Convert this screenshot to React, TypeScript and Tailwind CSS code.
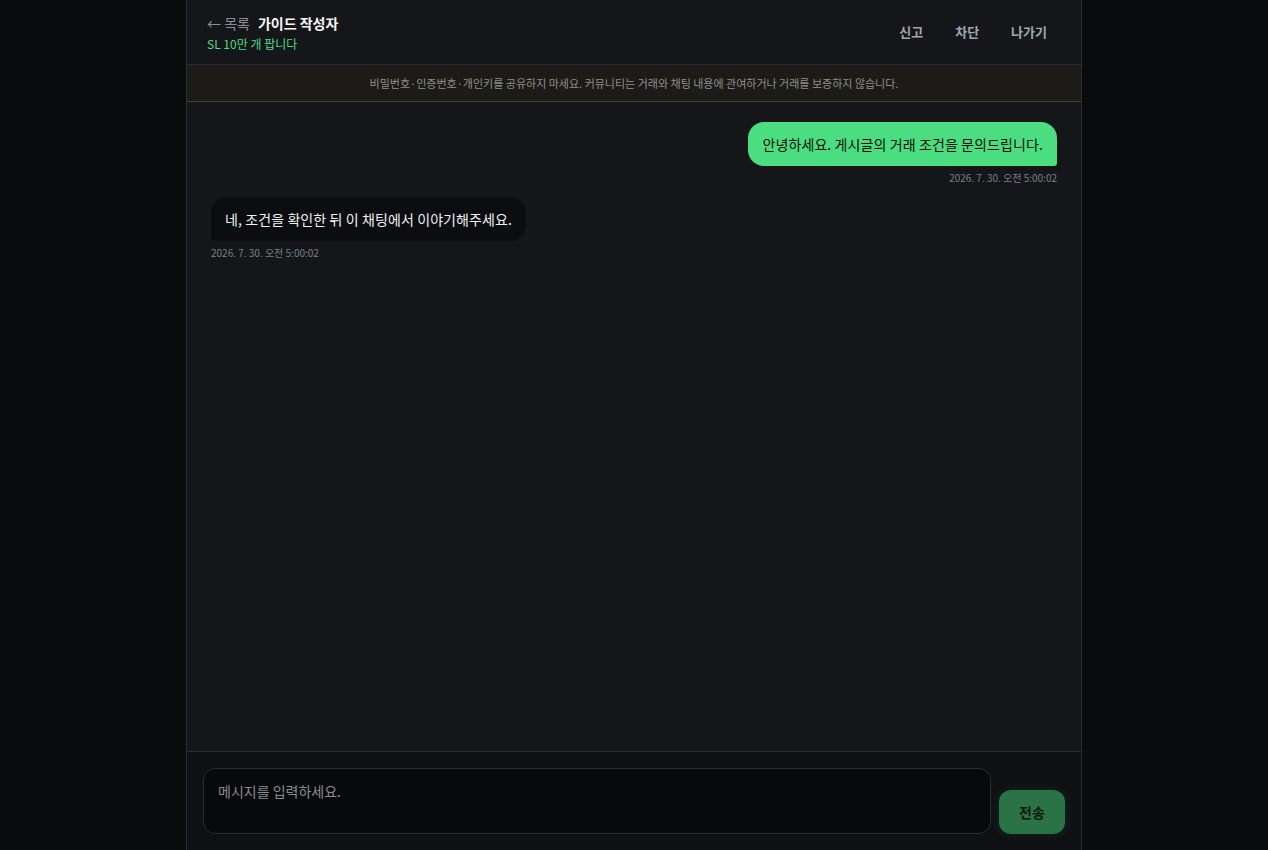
import React from 'react'

const FONT = { fontFamily: '"Noto Sans CJK KR", "Noto Sans", sans-serif' }

type Msg = { mine: boolean; text: string; time: string }

const MESSAGES: Msg[] = [
  { mine: true, text: '안녕하세요. 게시글의 거래 조건을 문의드립니다.', time: '2026. 7. 30. 오전 5:00:02' },
  { mine: false, text: '네, 조건을 확인한 뒤 이 채팅에서 이야기해주세요.', time: '2026. 7. 30. 오전 5:00:02' },
]

function Bubble({ msg }: { msg: Msg }) {
  return (
    <div className={msg.mine ? 'flex flex-col items-end' : 'flex flex-col items-start'}>
      <div
        className={
          msg.mine
            ? 'rounded-2xl rounded-br-[3px] bg-[#4ade80] px-[14px] py-[11px] text-[14px] leading-[22px] tracking-[0.1px] text-[#0b0d0c]'
            : 'rounded-2xl rounded-bl-[3px] bg-[#0c0d10] px-[14px] py-[11px] text-[14px] leading-[22px] tracking-[0.1px] text-[#f1f2f4]'
        }
      >
        {msg.text}
      </div>
      <div className="mt-[5px] text-[10px] leading-[14px] text-[#7c7f86]">{msg.time}</div>
    </div>
  )
}

export default function App() {
  return (
    <div className="min-h-screen bg-[#0a0b0d]" style={FONT}>
      <div className="mx-auto flex h-screen max-w-[896px] flex-col border-x border-[#2a2c31] bg-[#15161a]">
        {/*header*/}
        <div className="flex h-[65px] shrink-0 items-center justify-between border-b border-[#2a2c31] pl-5 pr-[18px]">
          <div className="flex flex-col">
            <div className="flex items-center gap-2 leading-[22px]">
              <span className="text-[14px] text-[#8b8e95]">← 목록</span>
              <span className="text-[14px] font-bold text-[#f5f6f7]">가이드 작성자</span>
            </div>
            <div className="mt-[1px] text-[12px] leading-[18px] text-[#4ade80]">SL 10만 개 팝니다</div>
          </div>
          <div className="flex items-center">
            <button className="px-4 py-2 text-[13px] font-bold text-[#a3a6ad]">신고</button>
            <button className="px-4 py-2 text-[13px] font-bold text-[#a3a6ad]">차단</button>
            <button className="px-4 py-2 text-[13px] font-bold text-[#a3a6ad]">나가기</button>
          </div>
        </div>
        {/*notice*/}
        <div className="flex h-[37px] shrink-0 items-center justify-center border-b border-[#4a3d1c] bg-[#1c1b18] text-[11px] text-[#8f8f8c]">
          비밀번호·인증번호·개인키를 공유하지 마세요. 커뮤니티는 거래와 채팅 내용에 관여하거나 거래를 보증하지 않습니다.
        </div>
        {/*messages*/}
        <div className="flex flex-1 flex-col gap-3 overflow-y-auto px-6 pt-5">
          {MESSAGES.map((m, i) => (
            <Bubble key={i} msg={m} />
          ))}
        </div>
        {/*footer*/}
        <div className="flex shrink-0 items-end gap-2 border-t border-[#2a2c31] bg-[#0f1013] p-4">
          <textarea
            className="h-[66px] flex-1 resize-none rounded-xl border border-[#2a2c31] bg-[#08090b] px-[14px] py-[11px] text-[14px] leading-[22px] text-[#e5e7eb] outline-none placeholder:text-[#8a8d94]"
            placeholder="메시지를 입력하세요."
            style={FONT}
          />
          <button className="h-[44px] w-[66px] rounded-xl bg-[#2a7346] text-[14px] font-bold text-[#0a1a10] shadow-[0_0_12px_rgba(74,222,128,0.12)]">
            전송
          </button>
        </div>
      </div>
    </div>
  )
}
